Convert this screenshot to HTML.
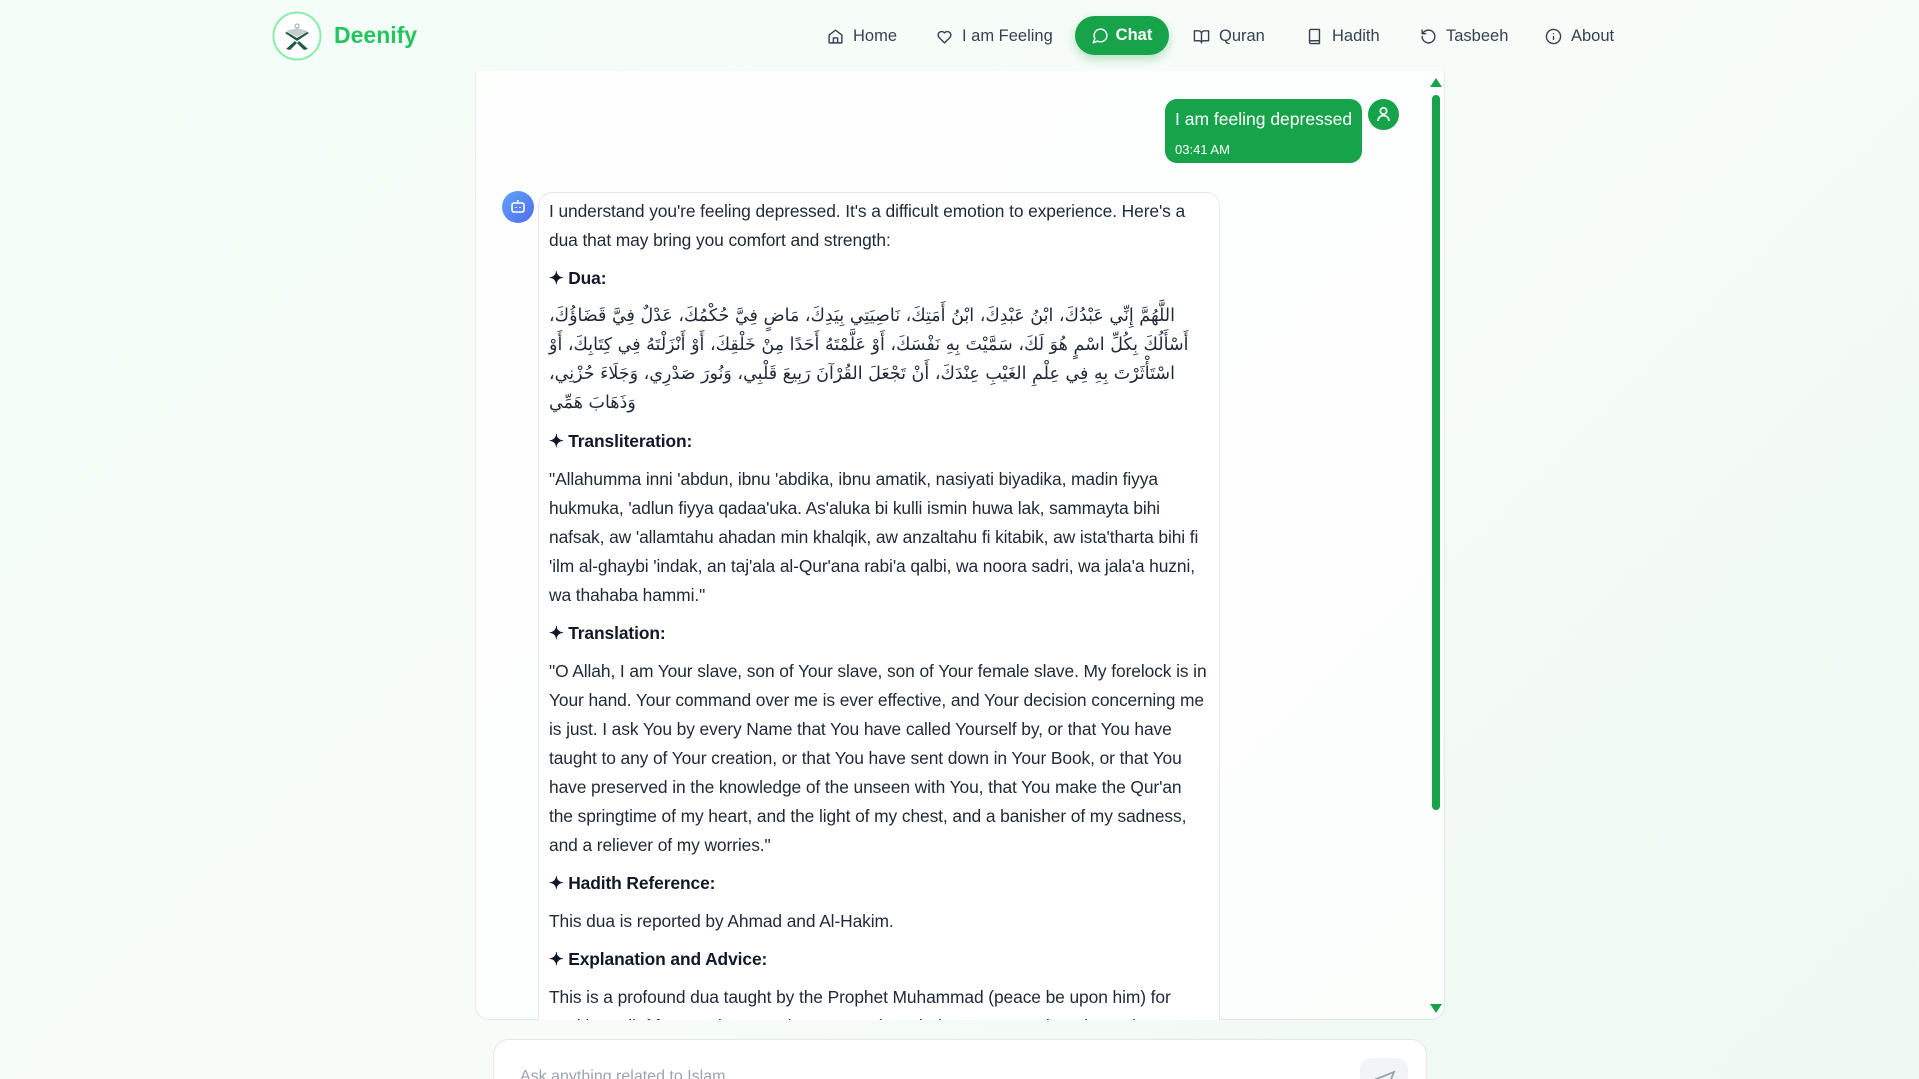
<!DOCTYPE html>
<html style="width:1919px;height:1079px;overflow:hidden"><head><meta charset="utf-8"><style>
*{box-sizing:border-box;margin:0;padding:0}
body{width:1919px;height:1079px;overflow:hidden;font-family:"Liberation Sans","Noto Sans CJK SC",sans-serif;background:linear-gradient(135deg,#f3fdf6 0%,#f8fcf9 50%,#eef9f1 100%);position:relative;color:#1f2937}
.nav{position:absolute;top:0;height:72px;display:flex;align-items:center;font-size:16.5px;color:#374151}
.nav svg{width:17px;height:17px;margin-right:9px;stroke:#374151;fill:none;stroke-width:2;stroke-linecap:round;stroke-linejoin:round}
.chatpill{position:absolute;left:1075px;top:16px;width:94px;height:39px;border-radius:20px;background:#16a34a;color:#fff;font-weight:bold;display:flex;align-items:center;justify-content:center;font-size:16.5px;box-shadow:0 4px 10px rgba(22,163,74,.3)}
.chatpill svg{width:17px;height:17px;margin-right:7px;stroke:#fff;fill:none;stroke-width:2}
.box{position:absolute;left:475px;top:71px;width:970px;height:949px;border:1px solid #e5e7eb;border-top:none;border-radius:0 0 14px 14px;background:rgba(255,255,255,.75);overflow:hidden}
.ub{position:absolute;left:1165px;top:99px;width:197px;height:64px;background:#16a34a;border-radius:12px;color:#fff;padding:10px 0 0 10px}
.bb{position:absolute;left:538px;top:192px;width:682px;height:900px;border:1px solid #e5e7eb;border-radius:14px;background:#fff;padding:4px 10px 0 10px;font-size:17.4px;line-height:29px;color:#1f2937;letter-spacing:-0.1px}
.bb p{margin-bottom:9px}
.bb b{color:#111827}
.ar{direction:rtl;text-align:left;font-family:"DejaVu Sans",sans-serif;font-size:17.5px;line-height:29px}
.ar span{display:block;text-align:left}
</style></head><body>
<svg style="position:absolute;left:272px;top:11px" width="50" height="50" viewBox="0 0 50 50"><circle cx="25" cy="25" r="23.5" fill="#fff" stroke="#86efac" stroke-width="2"/><circle cx="25" cy="15" r="2" fill="none" stroke="#9ca3af"/><path d="M14 20l11 6 11-6-11-3z" fill="#c7ccd1"/><path d="M13 22l12 8 12-8-2-1-10 6-10-6z" fill="#1f5b45"/><path d="M14 38l9-8 2 2-7 7zM36 38l-9-8-2 2 7 7z" fill="#1f5b45"/></svg>
<div style="position:absolute;left:334px;top:22px;font-size:23px;font-weight:bold;color:#22c55e">Deenify</div>

<div class="nav" style="left:827px"><svg viewBox="0 0 24 24"><path d="M3 10l9-7 9 7v11H3z"/><path d="M9 21v-7h6v7"/></svg>Home</div>
<div class="nav" style="left:936px"><svg viewBox="0 0 24 24"><path d="M12 21l-8-8a5 5 0 0 1 8-6 5 5 0 0 1 8 6z"/></svg>I am Feeling</div>
<div class="chatpill"><svg viewBox="0 0 24 24"><path d="M7.9 20A9 9 0 1 0 4 16.1L2 22z"/></svg>Chat</div>
<div class="nav" style="left:1193px"><svg viewBox="0 0 24 24"><path d="M2 4h6a4 4 0 0 1 4 4v13a3 3 0 0 0-3-3H2zM22 4h-6a4 4 0 0 0-4 4v13a3 3 0 0 1 3-3h7z"/></svg>Quran</div>
<div class="nav" style="left:1306px"><svg viewBox="0 0 24 24"><path d="M5 4a2 2 0 0 1 2-2h12v20H7a2 2 0 0 1-2-2zM5 18h14"/></svg>Hadith</div>
<div class="nav" style="left:1420px"><svg viewBox="0 0 24 24"><path d="M3 12a9 9 0 1 0 9-9 9.8 9.8 0 0 0-7 3L3 8M3 3v5h5"/></svg>Tasbeeh</div>
<div class="nav" style="left:1545px"><svg viewBox="0 0 24 24"><circle cx="12" cy="12" r="10"/><path d="M12 16v-4M12 8h0"/></svg>About</div>

<div class="box"></div>
<div style="position:absolute;left:1430px;top:78px;width:0;height:0;border-left:6px solid transparent;border-right:6px solid transparent;border-bottom:9px solid #16a34a"></div>
<div style="position:absolute;left:1432px;top:95px;width:8px;height:715px;border-radius:4px;background:#16a34a"></div>
<div style="position:absolute;left:1430px;top:1004px;width:0;height:0;border-left:6px solid transparent;border-right:6px solid transparent;border-top:9px solid #16a34a"></div>

<div class="ub"><div style="font-size:17.5px">I am feeling depressed</div><div style="font-size:13px;margin-top:12px">03:41 AM</div></div>
<div style="position:absolute;left:1368px;top:99px;width:31px;height:31px;border-radius:50%;background:#16a34a"><svg width="31" height="31" viewBox="0 0 31 31" fill="none" stroke="#fff" stroke-width="1.6"><circle cx="15.5" cy="12" r="3.2"/><path d="M10 22a5.5 5.5 0 0 1 11 0"/></svg></div>

<div style="position:absolute;left:502px;top:191px;width:32px;height:32px;border-radius:50%;background:linear-gradient(135deg,#60a5fa,#4f6bf0)"><svg width="32" height="32" viewBox="0 0 32 32" fill="none" stroke="#fff" stroke-width="1.6"><rect x="10" y="12" width="12" height="9" rx="2"/><path d="M16 12V9"/><path d="M14 16v1M18 16v1"/></svg></div>

<div style="position:absolute;left:475px;top:71px;width:970px;height:949px;overflow:hidden;pointer-events:none">
<div class="bb" style="left:63px;top:121px">
<p>I understand you're feeling depressed. It's a difficult emotion to experience. Here's a dua that may bring you comfort and strength:</p>
<p><b>✦ Dua:</b></p>
<p class="ar"><span>اللَّهُمَّ إِنِّي عَبْدُكَ، ابْنُ عَبْدِكَ، ابْنُ أَمَتِكَ، نَاصِيَتِي بِيَدِكَ، مَاضٍ فِيَّ حُكْمُكَ، عَدْلٌ فِيَّ قَضَاؤُكَ،</span><span>أَسْأَلُكَ بِكُلِّ اسْمٍ هُوَ لَكَ، سَمَّيْتَ بِهِ نَفْسَكَ، أَوْ عَلَّمْتَهُ أَحَدًا مِنْ خَلْقِكَ، أَوْ أَنْزَلْتَهُ فِي كِتَابِكَ، أَوْ</span><span>اسْتَأْثَرْتَ بِهِ فِي عِلْمِ الغَيْبِ عِنْدَكَ، أَنْ تَجْعَلَ القُرْآنَ رَبِيعَ قَلْبِي، وَنُورَ صَدْرِي، وَجَلَاءَ حُزْنِي،</span><span>وَذَهَابَ هَمِّي</span></p>
<p><b>✦ Transliteration:</b></p>
<p>"Allahumma inni 'abdun, ibnu 'abdika, ibnu amatik, nasiyati biyadika, madin fiyya hukmuka, 'adlun fiyya qadaa'uka. As'aluka bi kulli ismin huwa lak, sammayta bihi nafsak, aw 'allamtahu ahadan min khalqik, aw anzaltahu fi kitabik, aw ista'tharta bihi fi 'ilm al-ghaybi 'indak, an taj'ala al-Qur'ana rabi'a qalbi, wa noora sadri, wa jala'a huzni, wa thahaba hammi."</p>
<p><b>✦ Translation:</b></p>
<p>"O Allah, I am Your slave, son of Your slave, son of Your female slave. My forelock is in Your hand. Your command over me is ever effective, and Your decision concerning me is just. I ask You by every Name that You have called Yourself by, or that You have taught to any of Your creation, or that You have sent down in Your Book, or that You have preserved in the knowledge of the unseen with You, that You make the Qur'an the springtime of my heart, and the light of my chest, and a banisher of my sadness, and a reliever of my worries."</p>
<p><b>✦ Hadith Reference:</b></p>
<p>This dua is reported by Ahmad and Al-Hakim.</p>
<p><b>✦ Explanation and Advice:</b></p>
<p>This is a profound dua taught by the Prophet Muhammad (peace be upon him) for seeking relief from sadness and worry. It acknowledges our complete dependence</p>
</div></div>

<div style="position:absolute;left:493px;top:1039px;width:934px;height:80px;border:1px solid #e5e7eb;border-radius:16px;background:#fff"></div>
<div style="position:absolute;left:520px;top:1068px;font-size:16px;color:#9ca3af">Ask anything related to Islam...</div>
<div style="position:absolute;left:1360px;top:1058px;width:48px;height:48px;border-radius:12px;background:#f3f4f6"><svg width="48" height="48" viewBox="0 0 48 48" fill="none" stroke="#9ca3af" stroke-width="1.8"><path d="M34 14L14 22l8 4 4 8z"/></svg></div>
</body></html>
